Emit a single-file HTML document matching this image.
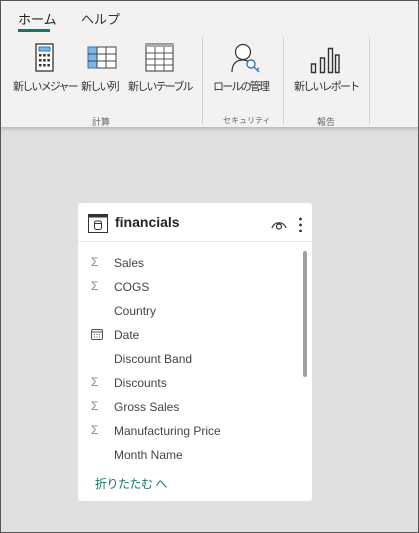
<!DOCTYPE html>
<html><head><meta charset="utf-8"><style>
*{margin:0;padding:0;box-sizing:border-box}
body{width:419px;height:533px;background:#e1dfdd;font-family:"Liberation Sans","Noto Sans CJK JP",sans-serif;position:relative;overflow:hidden}
.frame{position:absolute;left:0;top:0;width:419px;height:533px;border:1px solid #555;pointer-events:none;z-index:9}
.rib{position:absolute;left:0;top:0;width:419px;height:127px;background:#f3f2f1;box-shadow:0 2px 3px rgba(0,0,0,.18)}
.t{position:absolute;font-size:11px;letter-spacing:-1.8px;color:#333;white-space:nowrap}
.g{position:absolute;font-size:9px;color:#666;white-space:nowrap;top:115px}
.sep{position:absolute;top:37px;width:1px;height:88px;background:#d6d4d2}
.card{position:absolute;left:78px;top:203px;width:234px;height:298px;background:#fff;border-radius:3px}
.f{position:absolute;left:36px;font-size:12px;color:#444}
.sig{position:absolute;left:13px;font-size:12px;color:#888}
</style></head><body>
<div class="rib">
<div class="t" style="left:18px;top:9px;font-size:13px;letter-spacing:0;color:#222">ホーム</div>
<div style="position:absolute;left:18px;top:29px;width:32px;height:3px;background:#117865"></div>
<div class="t" style="left:81px;top:9px;font-size:13px;letter-spacing:0;color:#333">ヘルプ</div>
<svg style="position:absolute;left:35px;top:43px" width="19" height="30"><rect x="1" y="1" width="17" height="27" fill="#fff" stroke="#333" stroke-width="1.3"/><rect x="4" y="4" width="11" height="4" fill="#7fb6e6" stroke="#2a7ac4"/><g fill="#333"><rect x="4" y="11" width="2.5" height="2.5"/><rect x="8.2" y="11" width="2.5" height="2.5"/><rect x="12.4" y="11" width="2.5" height="2.5"/><rect x="4" y="16" width="2.5" height="2.5"/><rect x="8.2" y="16" width="2.5" height="2.5"/><rect x="12.4" y="16" width="2.5" height="2.5"/><rect x="4" y="21" width="2.5" height="2.5"/><rect x="8.2" y="21" width="2.5" height="2.5"/><rect x="12.4" y="21" width="2.5" height="2.5"/></g></svg>
<svg style="position:absolute;left:87px;top:46px" width="30" height="23"><rect x="1" y="1" width="28" height="21" fill="#fff" stroke="#444"/><rect x="1" y="1" width="9" height="21" fill="#7fb6e6" stroke="#2a7ac4"/><path d="M1 8H29M1 15H29M10 1V22M19 1V22" stroke="#444" fill="none"/></svg>
<svg style="position:absolute;left:145px;top:43px" width="30" height="30"><rect x="1" y="1" width="27" height="27" fill="#fff" stroke="#333"/><rect x="1" y="1" width="27" height="3" fill="#aaa"/><path d="M1 10H28M1 16H28M1 22H28M10 4V28M19 4V28" stroke="#555" fill="none"/></svg>
<div class="t" style="left:13px;top:78px">新しいメジャー</div>
<div class="t" style="left:81px;top:78px">新しい列</div>
<div class="t" style="left:128px;top:78px">新しいテーブル</div>
<div class="g" style="left:92px">計算</div>
<div class="sep" style="left:202px"></div>
<svg style="position:absolute;left:230px;top:42px" width="32" height="32"><circle cx="13" cy="10" r="7.5" fill="#fff" stroke="#333" stroke-width="1.2"/><path d="M2 30C2 21 7 18 13 18C16 18 18 19 20 20" fill="none" stroke="#333" stroke-width="1.2"/><circle cx="21" cy="22" r="4" fill="#fff" stroke="#2a7ac4" stroke-width="1.4"/><path d="M24 25L29 30M27 28L29 26" stroke="#2a7ac4" stroke-width="1.4" fill="none"/></svg>
<div class="t" style="left:213px;top:78px">ロールの管理</div>
<div class="g" style="left:223px;font-size:8px">セキュリティ</div>
<div class="sep" style="left:283px"></div>
<svg style="position:absolute;left:310px;top:47px" width="30" height="27"><path d="M1.5 17V25.5H5.5V17ZM10.5 11V25.5H14.5V11ZM18.5 1.5V25.5H22.5V1.5ZM25.5 8V25.5H29V8Z" fill="none" stroke="#333" stroke-width="1.4"/></svg>
<div class="t" style="left:294px;top:78px">新しいレポート</div>
<div class="g" style="left:317px">報告</div>
<div class="sep" style="left:369px"></div>
</div>
<div class="card">
<svg style="position:absolute;left:10px;top:11px" width="20" height="19"><rect x=".5" y=".5" width="19" height="18" fill="#fff" stroke="#333"/><rect x=".5" y=".5" width="19" height="3" fill="#333"/><rect x="6.5" y="7" width="7" height="8.5" rx="2" fill="none" stroke="#333"/><path d="M6.5 9.5H13.5" stroke="#333"/></svg>
<div style="position:absolute;left:37px;top:11px;font-size:14px;font-weight:bold;color:#252423">financials</div>
<svg style="position:absolute;left:193px;top:16px" width="16" height="11"><path d="M1 9C3 2 13 2 15 9" fill="none" stroke="#333" stroke-width="1.2"/><circle cx="8" cy="7.5" r="2.5" fill="none" stroke="#333" stroke-width="1.2"/></svg>
<div style="position:absolute;left:221px;top:13px;width:3px;height:16px;background:radial-gradient(circle,#333 1.3px,transparent 1.5px) 0 0/3px 6px"></div>
<div style="position:absolute;left:0;top:38px;width:234px;height:1px;background:#e8e8e8"></div>
<div style="position:absolute;left:225px;top:48px;width:4px;height:126px;background:#a19f9d;border-radius:2px"></div>
<div class="sig" style="top:52px">Σ</div><div class="f" style="top:53px">Sales</div>
<div class="sig" style="top:76px">Σ</div><div class="f" style="top:77px">COGS</div>
<div class="f" style="top:101px">Country</div>
<svg style="position:absolute;left:13px;top:126px" width="12" height="11"><rect x=".5" y=".5" width="11" height="10" rx="1.5" fill="none" stroke="#555"/><path d="M.5 3H11.5" stroke="#555"/><g fill="#555"><rect x="3" y="5" width="1" height="1"/><rect x="5.5" y="5" width="1" height="1"/><rect x="8" y="5" width="1" height="1"/><rect x="3" y="7.5" width="1" height="1"/><rect x="5.5" y="7.5" width="1" height="1"/><rect x="8" y="7.5" width="1" height="1"/></g></svg>
<div class="f" style="top:125px">Date</div>
<div class="f" style="top:149px">Discount Band</div>
<div class="sig" style="top:172px">Σ</div><div class="f" style="top:173px">Discounts</div>
<div class="sig" style="top:196px">Σ</div><div class="f" style="top:197px">Gross Sales</div>
<div class="sig" style="top:220px">Σ</div><div class="f" style="top:221px">Manufacturing Price</div>
<div class="f" style="top:245px">Month Name</div>
<div style="position:absolute;left:17px;top:272px;font-size:12px;letter-spacing:-0.5px;color:#117865">折りたたむ へ</div>
</div>
<div class="frame"></div>
</body></html>
